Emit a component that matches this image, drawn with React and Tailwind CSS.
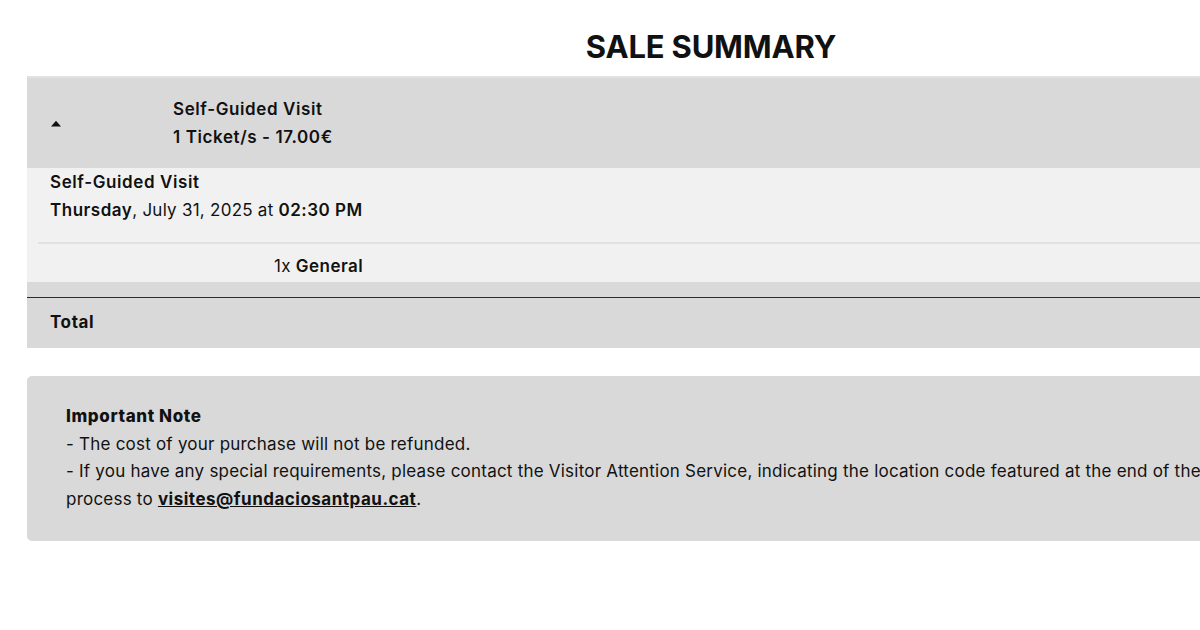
import React from "react";

export default function App() {
  return (
    <div className="w-[1200px] h-[630px] overflow-hidden bg-white text-[#111] font-['Inter',sans-serif]">
      <div className="ml-[27px] w-[1368px]">
        {/* Título */}
        <h1 className="h-[76px] pt-[27px] text-center text-[31px] leading-[40px] font-bold tracking-[-0.2px]">
          SALE SUMMARY
        </h1>

        {/* Cabecera del producto */}
        <div className="flex items-center h-[92px] bg-[#d9d9d9] border-t-2 border-[#e2e2e2]">
          <div className="w-[146px] pl-[23px] flex items-center">
            <svg width="12" height="8" viewBox="0 0 12 8" className="mt-[2px]">
              <path d="M6 0.8 L11 6.5 L1 6.5 Z" fill="#111" />
            </svg>
          </div>
          <div className="text-[17px] leading-[28px] font-semibold tracking-[0.6px]">
            <p>Self-Guided Visit</p>
            <p>1 Ticket/s - 17.00€</p>
          </div>
        </div>

        {/* Detalle */}
        <div className="bg-[#f1f1f1]">
          <div className="px-[23px] h-[74px] text-[17px] leading-[28px] tracking-[0.25px]">
            <p className="font-semibold tracking-[0.6px]">Self-Guided Visit</p>
            <p>
              <span className="font-semibold tracking-[0.5px]">Thursday</span>, July 31, 2025 at{" "}
              <span className="font-semibold tracking-[0.5px]">02:30 PM</span>
            </p>
          </div>
          <div className="ml-[11px] border-t-2 border-[#e2e2e2]"></div>
          <div className="h-[38px] flex items-center pt-[8px] pl-[247px] text-[17px] tracking-[0.25px]">
            <span>1x</span>&nbsp;<span className="font-semibold tracking-[0.5px]">General</span>
          </div>
        </div>

        <div className="h-[15px] bg-[#d9d9d9]"></div>
        <div className="h-[51px] flex items-center px-[23px] bg-[#d9d9d9] border-t-[1.5px] border-[#2a2a2a] text-[17px] font-bold tracking-[0.6px]">
          Total
        </div>

        {/* Nota importante */}
        <div className="mt-[28px] h-[165px] rounded-[5px] bg-[#d9d9d9] px-[39px] pt-[27px] text-[17px] leading-[27.5px] tracking-[0.22px]">
          <p className="font-extrabold tracking-[0.6px]">Important Note</p>
          <p>- The cost of your purchase will not be refunded.</p>
          <p className="w-[1180px]">
            - If you have any special requirements, please contact the Visitor Attention Service, indicating the location code featured at the end of the process to{" "}
            <a className="font-bold underline tracking-[0.5px]">visites@fundaciosantpau.cat</a>
            <span>.</span>
          </p>
        </div>
      </div>
    </div>
  );
}
